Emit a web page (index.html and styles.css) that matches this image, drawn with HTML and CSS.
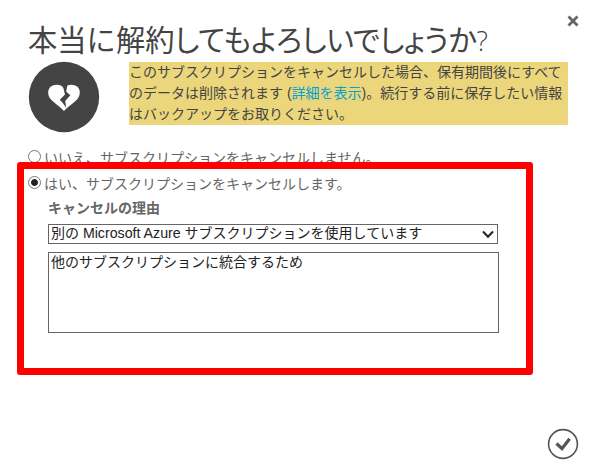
FILE: index.html
```html
<!DOCTYPE html>
<html lang="ja">
<head>
<meta charset="utf-8">
<title>サブスクリプションの解約</title>
<link rel="stylesheet" href="styles.css">
</head>
<body>
<main class="dialog">
  <button class="close" aria-label="閉じる"><svg width="12" height="12" viewBox="0 0 12 12"><path d="M1.5 1.5 10.5 10.5M10.5 1.5 1.5 10.5"/></svg></button>
  <h1 class="title">本当に解約<span class="kana">してもよろしいでしょうか</span><span class="mark">?</span></h1>
  <section class="notice">
    <svg class="badge" width="72" height="72" viewBox="0 0 72 72">
      <circle cx="36" cy="36" r="35.2" fill="#444"/>
      <path d="M36 27.3C33 22.6 26 22.8 22.6 25.8C19.2 29 19.7 34.5 22.4 37.8C25.5 41.6 31.5 45 36 50C40.5 45 46.5 41.6 49.6 37.8C52.3 34.5 52.8 29 49.4 25.8C46 22.8 39 22.6 36 27.3Z" fill="#fff"/>
      <path d="M34.2 22.5 39.6 23 38.2 30.4 42.3 34.2 37.2 40 38.2 46.8 34.6 41.8 31.8 38.8 37 33.4Z" fill="#444"/>
    </svg>
    <p class="warning">このサブスクリプションをキャンセルした場合、保有期間後にすべて<br>のデータは削除されます (<a class="link">詳細を表示</a>)。続行する前に保存したい情報<br>はバックアップをお取りください。</p>
  </section>
  <form class="form">
    <label class="option"><input class="radio" type="radio" name="cancel">いいえ、サブスクリプションをキャンセルしません。</label>
    <label class="option"><input class="radio" type="radio" name="cancel" checked>はい、サブスクリプションをキャンセルします。</label>
    <div class="reason">
      <div class="reason-label">キャンセルの理由</div>
      <div class="select" role="combobox"><span>別の <span class="latin">Microsoft Azure</span> サブスクリプションを使用しています</span><svg width="12" height="9" viewBox="0 0 12 9"><path d="M1 1.5 6 6.8 11 1.5"/></svg></div>
      <textarea class="comment">他のサブスクリプションに統合するため</textarea>
    </div>
  </form>
  <div class="highlight"></div>
  <button class="confirm" aria-label="確定"><svg width="32" height="32" viewBox="0 0 32 32"><circle cx="16" cy="16" r="14.4"/><path d="M9.5 15.5 15 20.7 22.6 10.8"/></svg></button>
</main>
</body>
</html>
```
FILE: styles.css
```css
* { box-sizing: border-box; }
body {
  margin: 0;
  background: #fff;
  color: #444;
  font-family: "Liberation Sans", "Noto Sans CJK JP", sans-serif;
  font-size: 14px;
}
.dialog {
  position: relative;
  width: 596px;
  height: 463px;
  padding: 22px 28px 0;
  overflow: hidden;
}
button { padding: 0; border: 0; background: none; }
button svg { display: block; fill: none; }
.close { position: absolute; top: 15px; right: 17px; }
.close svg { stroke: #666; stroke-width: 2.8; }
.title {
  margin: 0;
  height: 39px;
  line-height: 37px;
  font-size: 29.3px;
  font-weight: 400;
  white-space: nowrap;
}
.kana { font-feature-settings: "palt"; letter-spacing: -0.25px; }
.mark { font-family: "Open Sans", sans-serif; font-weight: 300; font-size: 27px; }
.notice { display: flex; gap: 29px; height: 86px; }
.badge { flex: none; }
.warning {
  width: 439px;
  height: 63px;
  margin: 1px 0 0;
  background: #ecd67c;
  line-height: 21px;
  white-space: nowrap;
}
.link { color: #00a3cf; }
.option {
  display: flex;
  align-items: center;
  gap: 3px;
  height: 26px;
  line-height: 20px;
  color: #666;
  white-space: nowrap;
}
.option:first-child { margin-top: -2px; }
.radio {
  appearance: none;
  width: 13px;
  height: 13px;
  margin: -3px 0 0;
  border: 1px solid #777;
  border-radius: 50%;
  background: #fff;
}
.radio:checked { background: radial-gradient(circle, #222 0 3px, #fff 3.8px); }
.reason { margin-left: 20px; color: #222; }
.reason-label { height: 27px; line-height: 23px; color: #666; font-weight: 700; }
.select {
  display: flex;
  align-items: center;
  justify-content: space-between;
  width: 450px;
  height: 20px;
  padding: 0 3px 0 2px;
  border: 1px solid #666;
  line-height: 16px;
  white-space: nowrap;
}
.select > span { height: 18px; }
.latin { font-size: 14.2px; }
.select svg { fill: none; stroke: #222; stroke-width: 2; }
.comment {
  display: block;
  width: 451px;
  height: 81px;
  margin: 8px 0 0;
  padding: 0 2px;
  border: 1px solid #666;
  color: #222;
  font: inherit;
  line-height: 18px;
  resize: none;
}
.highlight {
  position: absolute;
  left: 17px;
  top: 162px;
  width: 516px;
  height: 213px;
  border: 7px solid #f00;
  border-radius: 3px;
  pointer-events: none;
}
.confirm { position: absolute; right: 17px; bottom: 3px; }
.confirm svg { stroke: #555; stroke-width: 1.6; }
.confirm path { stroke-width: 3.2; }
```
